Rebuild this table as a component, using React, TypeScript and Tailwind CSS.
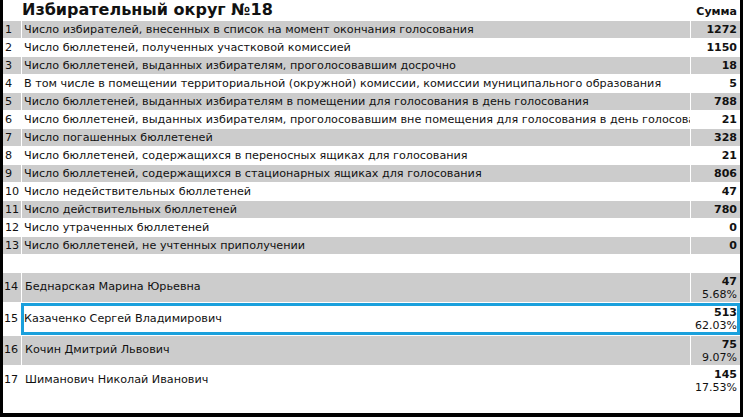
const stats: [number, string, string][] = [
  [1, "Число избирателей, внесенных в список на момент окончания голосования", "1272"],
  [2, "Число бюллетеней, полученных участковой комиссией", "1150"],
  [3, "Число бюллетеней, выданных избирателям, проголосовавшим досрочно", "18"],
  [4, "В том числе в помещении территориальной (окружной) комиссии, комиссии муниципального образования", "5"],
  [5, "Число бюллетеней, выданных избирателям в помещении для голосования в день голосования", "788"],
  [6, "Число бюллетеней, выданных избирателям, проголосовавшим вне помещения для голосования в день голосования", "21"],
  [7, "Число погашенных бюллетеней", "328"],
  [8, "Число бюллетеней, содержащихся в переносных ящиках для голосования", "21"],
  [9, "Число бюллетеней, содержащихся в стационарных ящиках для голосования", "806"],
  [10, "Число недействительных бюллетеней", "47"],
  [11, "Число действительных бюллетеней", "780"],
  [12, "Число утраченных бюллетеней", "0"],
  [13, "Число бюллетеней, не учтенных приполучении", "0"],
]

const candidates: [number, string, string, string][] = [
  [14, "Беднарская Марина Юрьевна", "47", "5.68%"],
  [15, "Казаченко Сергей Владимирович", "513", "62.03%"],
  [16, "Кочин Дмитрий Львович", "75", "9.07%"],
  [17, "Шиманович Николай Иванович", "145", "17.53%"],
]

export default function App() {
  return (
    <div
      className="w-[743px] h-[417px] overflow-hidden bg-white border-l-[3px] border-r-[3px] border-b-[4px] border-black text-[11.2px] text-[#111]"
      style={{ fontFamily: '"DejaVu Sans", Verdana, sans-serif' }}
    >
      {/* header */}
      <div className="flex items-end h-[21px] pb-[2px]">
        <div className="w-[19px]" />
        <div className="flex-1 text-[16px] font-bold leading-[18px]">Избирательный округ №18</div>
        <div className="pr-[3px] font-bold text-[11px] leading-[14px]">Сумма</div>
      </div>

      <div className="flex flex-col gap-px">
        {stats.map(([n, label, value]) => {
          const bg = n % 2 === 1 ? "bg-[#cccccc]" : "bg-white"
          return (
            <div key={n} className="flex gap-px h-[17px] leading-[17px]">
              <div className={`w-[18px] shrink-0 pl-[2px] ${bg}`}>{n}</div>
              <div className={`flex-1 min-w-0 overflow-hidden whitespace-nowrap pl-[2px] ${bg}`}>{label}</div>
              <div className={`w-[49px] shrink-0 text-right pr-[3px] font-bold text-[11px] ${bg}`}>{value}</div>
            </div>
          )
        })}

        {/* spacer */}
        <div className="flex gap-px h-[17px]">
          <div className="w-[18px] shrink-0" />
          <div className="flex-1" />
        </div>

        {candidates.map(([n, name, votes, pct]) => {
          const bg = n % 2 === 0 ? "bg-[#cccccc]" : "bg-white"
          const active = n === 15
          return (
            <div key={n} className={`flex gap-px ${active ? "h-[32px]" : "h-[29px]"}`}>
              <div className={`w-[18px] shrink-0 flex items-center pl-[1px] ${bg}`}>{n}</div>
              <div className={`flex-1 flex min-w-0 ${active ? "border-[3px] border-[#1aa0dc] -ml-px" : "gap-px"}`}>
                <div className={`flex-1 min-w-0 flex items-center whitespace-nowrap ${active ? "pl-0" : "pl-[3px]"} ${bg}`}>{name}</div>
                <div className={`shrink-0 flex flex-col justify-center items-end leading-[13px] text-[11px] ${active ? "w-[46px] pr-0" : "w-[49px] pr-[3px]"} ${bg}`}>
                  <span className="font-bold">{votes}</span>
                  <span>{pct}</span>
                </div>
              </div>
            </div>
          )
        })}
      </div>
    </div>
  )
}
